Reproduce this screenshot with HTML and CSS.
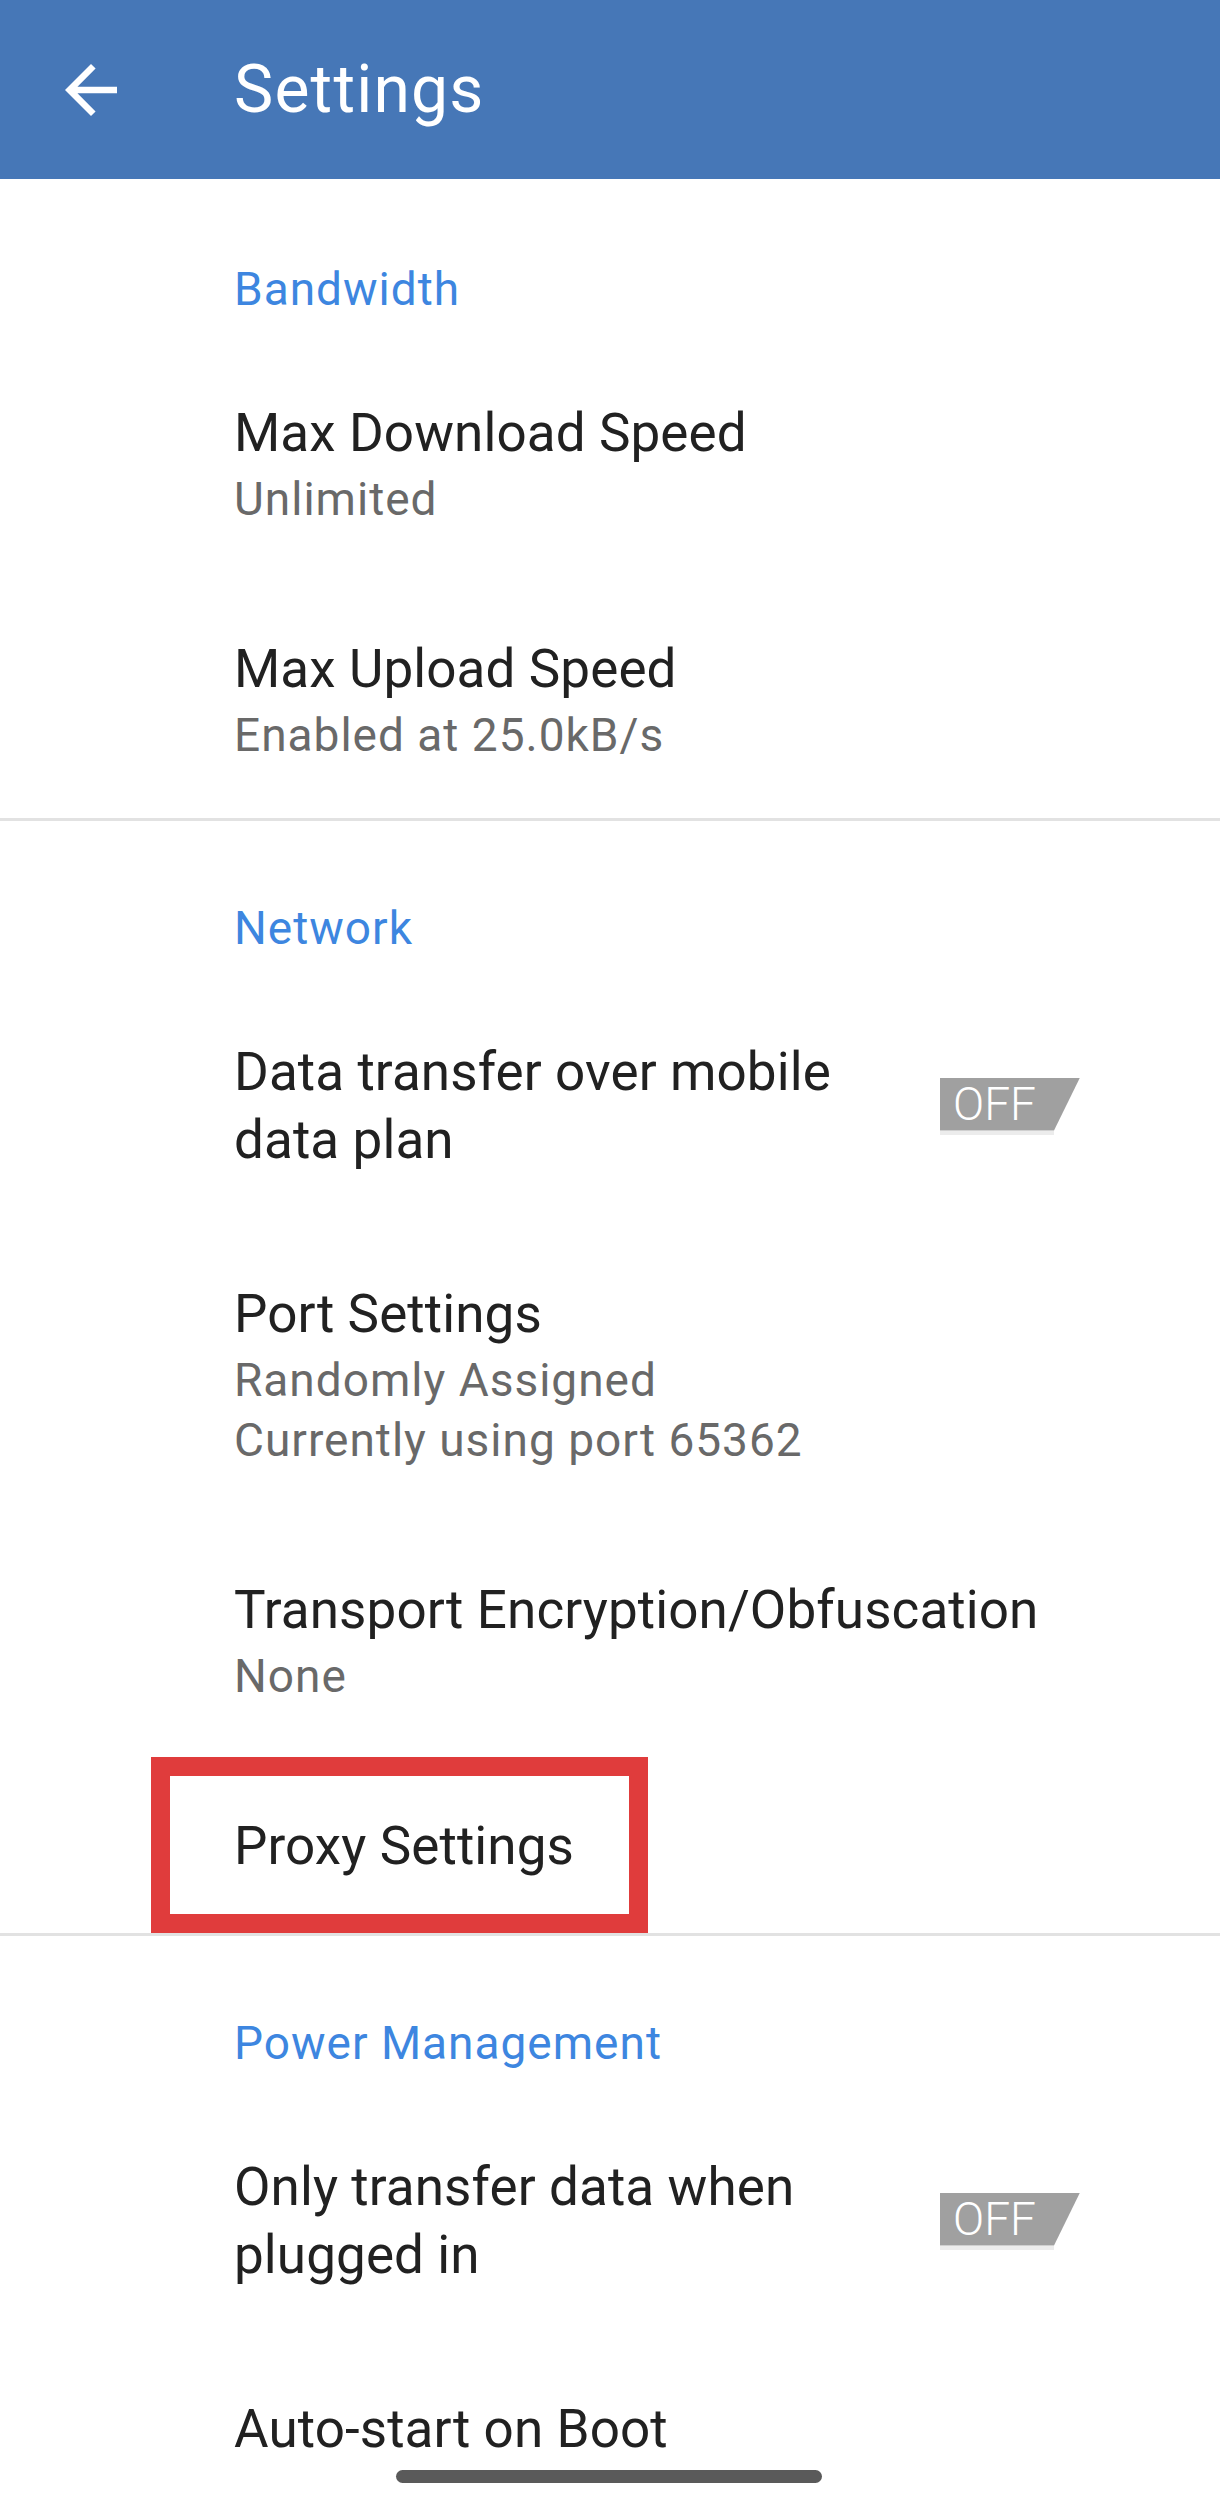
FILE: index.html
```html
<!DOCTYPE html>
<html lang="en">
<head>
<meta charset="utf-8">
<title>Settings</title>
<link rel="stylesheet" href="styles.css">
</head>
<body>
<div class="screen">
  <header class="appbar">
    <svg class="back" viewBox="0 0 24 24" width="78" height="78" aria-hidden="true">
      <path d="M20 11H7.83l5.59-5.59L12 4l-8 8 8 8 1.41-1.41L7.83 13H20v-2z" fill="#ffffff"/>
    </svg>
    <h1 class="appbar-title">Settings</h1>
  </header>

  <section class="group group-first">
    <h2 class="category">Bandwidth</h2>
    <div class="row">
      <div class="row-text">
        <div class="row-title">Max Download Speed</div>
        <div class="row-sub">Unlimited</div>
      </div>
    </div>
    <div class="row">
      <div class="row-text">
        <div class="row-title">Max Upload Speed</div>
        <div class="row-sub">Enabled at 25.0kB/s</div>
      </div>
    </div>
  </section>
  <div class="divider"></div>

  <section class="group">
    <h2 class="category">Network</h2>
    <div class="row">
      <div class="row-text">
        <div class="row-title">Data transfer over mobile data plan</div>
      </div>
      <div class="switch">
        <div class="switch-body"><span class="switch-label">OFF</span></div>
        <div class="switch-edge"></div>
      </div>
    </div>
    <div class="row">
      <div class="row-text">
        <div class="row-title">Port Settings</div>
        <div class="row-sub">Randomly Assigned<br>Currently using port 65362</div>
      </div>
    </div>
    <div class="row">
      <div class="row-text">
        <div class="row-title">Transport Encryption/Obfuscation</div>
        <div class="row-sub">None</div>
      </div>
    </div>
    <div class="row row-marked">
      <div class="row-text">
        <div class="row-title">Proxy Settings</div>
      </div>
      <div class="highlight"></div>
    </div>
  </section>
  <div class="divider"></div>

  <section class="group">
    <h2 class="category">Power Management</h2>
    <div class="row">
      <div class="row-text">
        <div class="row-title">Only transfer data when plugged in</div>
      </div>
      <div class="switch">
        <div class="switch-body"><span class="switch-label">OFF</span></div>
        <div class="switch-edge"></div>
      </div>
    </div>
    <div class="row">
      <div class="row-text">
        <div class="row-title">Auto-start on Boot</div>
      </div>
    </div>
  </section>

  <div class="home-indicator"></div>
</div>
</body>
</html>
```

FILE: styles.css
```css
html, body {
  margin: 0;
  padding: 0;
  background: #ffffff;
}

body {
  font-family: Roboto, "Noto Sans", "DejaVu Sans", sans-serif;
  color: #212121;
}

.screen {
  position: relative;
  width: 1220px;
  height: 2503px;
  overflow: hidden;
  background: #ffffff;
}

/* App bar */
.appbar {
  height: 179px;
  background: #4677b7;
  display: flex;
  align-items: center;
  padding-left: 52px;
  box-sizing: border-box;
}

.back {
  flex: none;
  display: block;
}

.appbar-title {
  margin: 0 0 0 104px;
  font-size: 66px;
  font-weight: 400;
  line-height: 80px;
  letter-spacing: 1.2px;
  color: #ffffff;
}

/* Groups */
.group {
  padding-top: 77px;
}

.group-first {
  padding-top: 80px;
}

.category {
  margin: 0 0 27px 0;
  padding-left: 234px;
  font-size: 46px;
  font-weight: 400;
  line-height: 60px;
  letter-spacing: 1px;
  color: #3d86e0;
}

.row {
  position: relative;
  display: flex;
  align-items: center;
  padding: 53px 140px 53px 234px;
}

.row-text {
  flex: 1;
  min-width: 0;
}

.row-title {
  font-size: 53px;
  line-height: 68px;
  letter-spacing: 0.1px;
  color: #212121;
  max-width: 640px;
}

.row-text:only-child .row-title {
  max-width: none;
}

.row-sub {
  margin-top: 2px;
  font-size: 46px;
  line-height: 60px;
  letter-spacing: 1px;
  color: #696969;
}

.divider {
  height: 3px;
  background: #e2e2e2;
}

/* OFF switch */
.switch {
  flex: none;
  width: 140px;
  display: flex;
  flex-direction: column;
}

.switch-body {
  height: 53px;
  background: #a0a0a0;
  clip-path: polygon(0 0, 140px 0, 114px 53px, 0 53px);
  display: flex;
  align-items: center;
  padding-left: 13px;
}

.switch-label {
  font-size: 46px;
  font-weight: 300;
  line-height: 53px;
  color: #ffffff;
}

.switch-edge {
  width: 114px;
  height: 4px;
  background: #ececec;
}

/* Red annotation box */
.highlight {
  position: absolute;
  top: -2px;
  left: 151px;
  width: 497px;
  height: 176px;
  box-sizing: border-box;
  border: 19px solid #e03c3c;
  pointer-events: none;
}

/* Gesture bar */
.home-indicator {
  position: absolute;
  left: 396px;
  top: 2470px;
  width: 426px;
  height: 13px;
  border-radius: 7px;
  background: #5a5a5a;
}
```
